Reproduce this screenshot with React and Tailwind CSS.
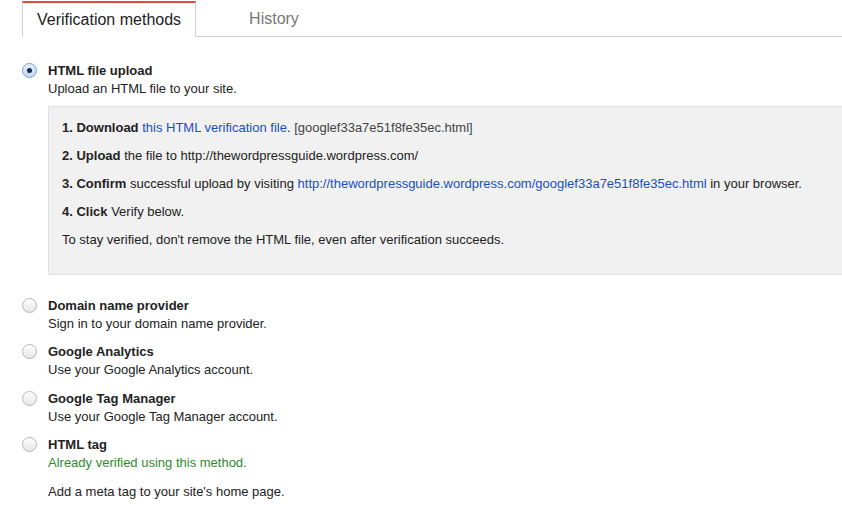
import React from "react";

const font = { fontFamily: '"Liberation Sans", Arial, sans-serif' };

function Radio({ checked }) {
    return (
        <div
            className={`mt-[1px] w-[15px] h-[15px] shrink-0 rounded-full border flex items-center justify-center ${
                checked
                    ? "border-[#7aa3d6] bg-gradient-to-b from-[#e4eefc] to-[#c2d7f3]"
                    : "border-[#b5b5b5] bg-gradient-to-b from-[#ffffff] to-[#e6e6e6]"
            }`}
        >
            {checked && <div className="w-[5px] h-[5px] rounded-full bg-[#1a2a44]" />}
        </div>
    );
}

function Method({ checked, title, className = "", children }) {
    return (
        <div className={`flex gap-[11px] ${className}`}>
            <Radio checked={checked} />
            <div className="flex-1 min-w-0">
                <div className="font-bold text-[13px] leading-[18px] text-[#222]">{title}</div>
                {children}
            </div>
        </div>
    );
}

export default function App() {
    return (
        <div className="w-[842px] h-[516px] bg-white overflow-hidden text-[#222]" style={font}>
            {/* tabs */}
            <div className="flex items-end h-[37px] pl-[22px]">
                <div className="h-[36px] px-[14px] flex items-center border-t-2 border-t-[#dd4b39] border-l border-r border-[#d0d0d0] bg-white text-[16px] text-[#222]">
                    Verification methods
                </div>
                <div className="flex-1 h-[36px] border-b border-[#cccccc] flex items-center pl-[53px] text-[16px] text-[#777]">
                    History
                </div>
            </div>

            <div className="pl-[22px] pt-[25px] flex flex-col">
                <Method checked title="HTML file upload">
                    <div className="text-[13px] leading-[18px]">Upload an HTML file to your site.</div>
                    <div className="mt-[8px] -mr-[2px] bg-[#f1f1f1] border border-[#e2e2e2] pl-[13px] pt-[12px] pb-[25px] flex flex-col gap-[10px] text-[13px] leading-[18px] whitespace-nowrap">
                        <div>
                            <b>1. Download</b> <span className="text-[#1a4fbf]">this HTML verification file</span>. <span className="text-[#444]">[googlef33a7e51f8fe35ec.html]</span>
                        </div>
                        <div>
                            <b>2. Upload</b> the file to http://thewordpressguide.wordpress.com/
                        </div>
                        <div>
                            <b>3. Confirm</b> successful upload by visiting{" "}
                            <span className="text-[#1a4fbf]">http://thewordpressguide.wordpress.com/googlef33a7e51f8fe35ec.html</span> in your browser.
                        </div>
                        <div>
                            <b>4. Click</b> Verify below.
                        </div>
                        <div>To stay verified, don't remove the HTML file, even after verification succeeds.</div>
                    </div>
                </Method>

                <div className="mt-[22px] flex flex-col">
                    <Method title="Domain name provider">
                        <div className="text-[13px] leading-[18px]">Sign in to your domain name provider.</div>
                    </Method>
                    <Method title="Google Analytics" className="mt-[10px]">
                        <div className="text-[13px] leading-[18px]">Use your Google Analytics account.</div>
                    </Method>
                    <Method title="Google Tag Manager" className="mt-[11px]">
                        <div className="text-[13px] leading-[18px]">Use your Google Tag Manager account.</div>
                    </Method>
                    <Method title="HTML tag" className="mt-[10px]">
                        <div className="text-[13px] leading-[18px] text-[#2f8a2f]">Already verified using this method.</div>
                        <div className="mt-[11px] text-[13px] leading-[18px]">Add a meta tag to your site's home page.</div>
                    </Method>
                </div>
            </div>
        </div>
    );
}
